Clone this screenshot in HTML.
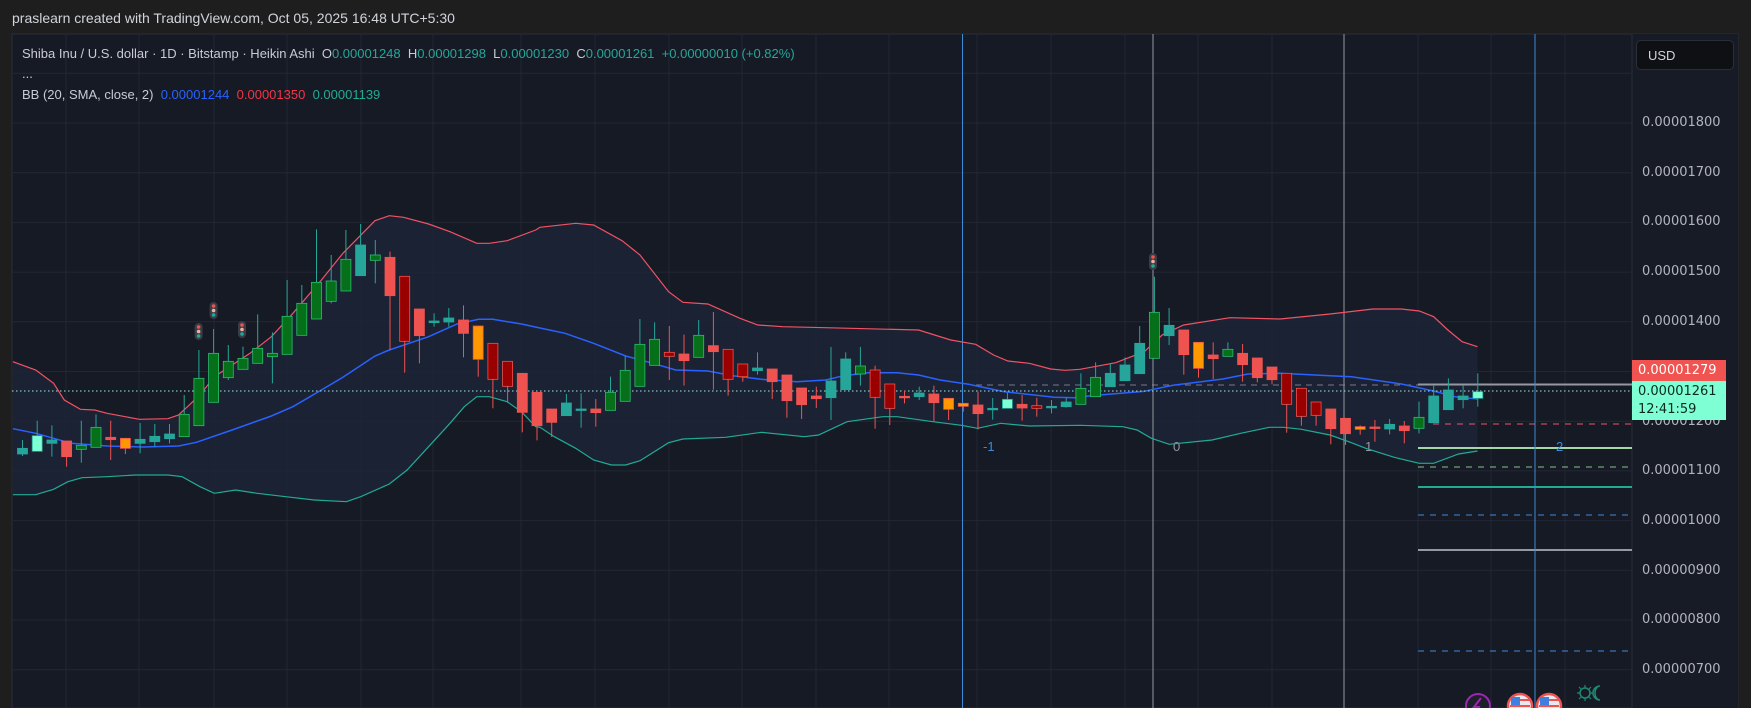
<!DOCTYPE html>
<html><head><meta charset="utf-8"><style>
html,body{margin:0;padding:0;width:1751px;height:708px;overflow:hidden;background:#1e1e1e;font-family:"Liberation Sans",sans-serif}
#hdr{position:absolute;left:12px;top:10px;color:#d1d4dc;font-size:14px}
#lg{position:absolute;left:22px;top:46px;font-size:13px;color:#c8cbd3;white-space:nowrap}
#lg span.g{color:#26a69a}
#dots{position:absolute;left:22px;top:66px;color:#c8cbd3;font-size:13px}
#bb{position:absolute;left:22px;top:87px;font-size:13px;color:#c8cbd3}
svg{position:absolute;left:0;top:0}
.ax{position:absolute;left:1642px;font-size:13px;color:#b2b5be;font-family:"DejaVu Sans",sans-serif;letter-spacing:0}
#usd{position:absolute;left:1636px;top:40px;width:98px;height:30px;background:#0f1014;border:1px solid #2a2e39;border-radius:5px;color:#d1d4dc;font-size:13px;line-height:30px;box-sizing:border-box;padding-left:11px}
.pl{position:absolute;left:1632px;width:94px;font-family:"DejaVu Sans",sans-serif;font-size:13px;padding-left:6px;box-sizing:border-box}
</style></head><body>
<svg id="s" width="1751" height="708"></svg>
<div id="hdr">praslearn created with TradingView.com, Oct 05, 2025 16:48 UTC+5:30</div>
<div id="lg">Shiba Inu / U.S. dollar · 1D · Bitstamp · Heikin Ashi&nbsp; O<span class="g">0.00001248</span>&nbsp; H<span class="g">0.00001298</span>&nbsp; L<span class="g">0.00001230</span>&nbsp; C<span class="g">0.00001261</span>&nbsp; <span class="g">+0.00000010 (+0.82%)</span></div>
<div id="dots">...</div>
<div id="bb">BB (20, SMA, close, 2)&nbsp; <span style="color:#2962ff">0.00001244</span>&nbsp; <span style="color:#f23645">0.00001350</span>&nbsp; <span style="color:#22ab94">0.00001139</span></div>
<div id="usd">USD</div>
<div class="ax" style="top:115px">0.00001800</div>
<div class="ax" style="top:165px">0.00001700</div>
<div class="ax" style="top:214px">0.00001600</div>
<div class="ax" style="top:264px">0.00001500</div>
<div class="ax" style="top:314px">0.00001400</div>
<div class="ax" style="top:414px">0.00001200</div>
<div class="ax" style="top:463px">0.00001100</div>
<div class="ax" style="top:513px">0.00001000</div>
<div class="ax" style="top:563px">0.00000900</div>
<div class="ax" style="top:612px">0.00000800</div>
<div class="ax" style="top:662px">0.00000700</div>
<div class="pl" style="top:360px;height:21px;background:#f05350;color:#fff;line-height:21px">0.00001279</div>
<div class="pl" style="top:381px;height:39px;background:#7fffd4;color:#0b2a22;line-height:18px;padding-top:2px">0.00001261<br>12:41:59</div>
<script>
var s=document.getElementById('s'),h='';
function P(a,ox,lim){return a.filter(function(p){return lim?p[0]<=lim:true}).map(function(p){return (ox+p[0]/2.8).toFixed(1)+','+(200+p[1]/3).toFixed(1)}).join(' ')}
h+='<rect x="12" y="34" width="1726" height="674" fill="#161a25"/>';
h+='<rect x="12" y="34" width="1726" height="674" fill="none" stroke="#2a2e39"/>';
h+='<rect x="1632" y="34" width="106" height="674" fill="#171b26"/><line x1="1632" y1="34" x2="1632" y2="708" stroke="#2a2e39"/>';
var vx=[66,139,214,287,361,433,521,595,669,742,816,889,977,1051,1125,1198,1272,1344,1418,1491,1565];
vx.forEach(function(x){h+='<line x1="'+x+'" y1="34" x2="'+x+'" y2="708" stroke="#232735"/>'});
for(var p=1900;p>=600;p-=100){var y=123+(1800-p)*0.497;h+='<line x1="12" y1="'+y+'" x2="1632" y2="'+y+'" stroke="#232735"/>'}
var U3=[[36,485],[100,510],[150,550],[180,600],[225,628],[265,630],[300,640],[390,658],[470,656],[500,645],[560,585],[600,530],[700,460],[760,410],[820,340],[900,240],[960,160],[1050,62],[1090,47],[1130,52],[1200,72],[1260,95],[1335,130],[1370,130],[1420,122],[1500,90],[1568,72]];
var U4=[[0,82],[100,70],[150,75],[230,122],[280,165],[360,275],[400,307],[470,312],[560,355],[610,375],[680,380],[800,383],[1060,390],[1150,420],[1220,433],[1270,465],[1310,483],[1370,490],[1430,507],[1470,511],[1520,503],[1568,495]];
var U5=[[0,508],[100,488],[180,455],[230,405],[290,375],[420,353],[560,357],[700,342],[820,327],[900,327],[950,333],[990,350],[1030,390],[1070,425],[1113,440]];
var M3=[[36,686],[100,700],[200,730],[300,738],[400,741],[500,738],[550,727],[650,690],[760,648],[820,620],[900,570],[960,532],[1050,468],[1090,450],[1200,410],[1280,372],[1340,358],[1380,358],[1460,372],[1568,398]];
var M4=[[0,384],[70,400],[150,430],[240,468],[300,485],[380,510],[470,513],[540,527],[620,538],[720,545],[800,540],[850,527],[920,518],[1000,518],[1060,525],[1120,540],[1200,553],[1300,575],[1440,592],[1500,593],[1568,585]];
var M5=[[0,590],[80,583],[180,574],[260,556],[400,537],[470,522],[560,520],[700,527],[760,530],[900,552],[990,573],[1050,590],[1113,597]];
var L3=[[36,884],[100,884],[150,868],[190,845],[230,833],[300,830],[380,825],[470,825],[510,830],[560,860],[600,880],[660,870],[720,880],[800,890],[880,900],[970,905],[1010,890],[1090,852],[1140,810],[1200,740],[1260,670],[1300,620],[1335,590],[1370,590],[1420,605],[1460,635],[1500,680],[1540,708],[1568,720]];
var L4=[[0,682],[40,710],[100,745],[150,780],[200,795],[240,795],[280,782],[360,728],[400,717],[520,712],[620,697],[740,710],[780,705],[860,665],[960,650],[1000,650],[1100,665],[1180,676],[1225,685],[1290,670],[1370,678],[1568,676]];
var L5=[[0,676],[120,680],[160,690],[200,715],[250,733],[370,720],[450,700],[530,682],[570,682],[620,688],[700,705],[760,728],[800,745],[880,772],[950,790],[990,790],[1060,762],[1113,753]];
var up=P(U3,0,1512)+' '+P(U4,540,1512)+' '+P(U5,1080);
var lo=P(L3,0,1512)+' '+P(L4,540,1512)+' '+P(L5,1080);
var loR=lo.split(' ').reverse().join(' ');
h+='<polygon points="'+up+' '+loR+'" fill="#1c2536" opacity="0.85"/>';
h+='<line x1="976" y1="385" x2="1418" y2="385" stroke="#787b86" stroke-dasharray="6,5"/>';
h+='<line x1="1418" y1="384.5" x2="1632" y2="384.5" stroke="#9598a1" stroke-width="2"/>';
h+='<line x1="1433" y1="424" x2="1632" y2="424" stroke="#f05365" stroke-dasharray="6,6"/>';
h+='<line x1="1418" y1="448" x2="1632" y2="448" stroke="#a5d6a7" stroke-width="2"/>';
h+='<line x1="1418" y1="467" x2="1632" y2="467" stroke="#81c784" stroke-dasharray="6,6"/>';
h+='<line x1="1418" y1="487" x2="1632" y2="487" stroke="#22ab94" stroke-width="2"/>';
h+='<line x1="1418" y1="515" x2="1632" y2="515" stroke="#3d8bd9" stroke-dasharray="6,6"/>';
h+='<line x1="1418" y1="550" x2="1632" y2="550" stroke="#9598a1" stroke-width="2"/>';
h+='<line x1="1418" y1="651" x2="1632" y2="651" stroke="#3d8bd9" stroke-dasharray="6,6"/>';
h+='<line x1="962.5" y1="34" x2="962.5" y2="708" stroke="#3d8bd9"/>';
h+='<line x1="1153" y1="34" x2="1153" y2="708" stroke="#9598a1"/>';
h+='<line x1="1344" y1="34" x2="1344" y2="708" stroke="#9598a1"/>';
h+='<line x1="1535" y1="34" x2="1535" y2="708" stroke="#3d8bd9"/>';
h+='<text x="983" y="451" fill="#3d8bd9" font-size="13" font-family="Liberation Sans">-1</text>';
h+='<text x="1173" y="451" fill="#9598a1" font-size="13" font-family="Liberation Sans">0</text>';
h+='<text x="1365" y="451" fill="#9598a1" font-size="13" font-family="Liberation Sans">1</text>';
h+='<text x="1556" y="451" fill="#3d8bd9" font-size="13" font-family="Liberation Sans">2</text>';
h+='<polyline points="'+up+'" fill="none" stroke="#f05365" stroke-width="1.2"/>';
h+='<polyline points="'+P(M3,0,1512)+' '+P(M4,540,1512)+' '+P(M5,1080)+'" fill="none" stroke="#2962ff" stroke-width="1.5"/>';
h+='<polyline points="'+lo+'" fill="none" stroke="#22ab94" stroke-width="1.2"/>';
var C="745 762 720 768 T|707 754 662 754 L|720 730 676 770 T|723 770 723 800 R|736 748 662 788 G|682 742 643 742 G|712 719 662 780 R|715 745 715 762 O|718 730 669 760 T|709 725 672 740 T|702 716 672 730 T|643 710 585 710 G|535 677 450 677 G|460 607 387 607 G|484 533 435 540 G|475 508 440 508 G|445 490 343 490 G|460 470 397 550 G|349 463 240 463 G|310 406 255 406 G|247 357 88 357 G|243 304 165 310 G|178 273 90 273 G|135 227 72 227 T|165 181 120 250 G|172 287 155 450 R|229 424 229 518 D|327 407 327 490 R|363 368 340 380 T|354 366 324 380 T|360 400 316 472 R|378 478 378 530 O|430 538 430 625 D|484 559 484 605 D|520 637 520 697 R|577 677 577 721 R|627 667 627 711 R|609 647 582 647 T|627 629 580 683 T|627 638 597 680 R|577 631 530 631 G|511 604 468 604 G|433 559 357 559 G|418 496 367 496 G|457 469 378 540 D|462 482 404 557 R|406 472 360 472 G|437 455 336 569 R|448 538 448 587 D|492 530 492 545 D|504 512 457 524 T|507 545 507 597 R|525 602 525 653 R|564 614 564 657 R|588 596 560 624 R|543 593 441 660 T|477 569 457 569 T|498 522 441 557 G|510 592 497 686 D|552 625 552 675 D|589 592 572 610 R|579 590 560 600 T|582 608 557 664 R|595 628 595 660 O|610 619 610 635 O|615 641 575 688 R|625 627 594 659 T|598 625 578 625 L|613 624 585 662 R|617 625 593 650 D|619 623 600 640 T|606 620 592 623 T|565 613 520 613 G|532 590 487 590 G|520 560 490 560 T|495 542 472 542 T|430 521 378 521 T|337 475 230 475 G|376 407 324 435 T|390 464 390 524 R|427 505 427 533 O|465 476 427 537 R|448 469 427 469 G|460 494 432 545 R|474 533 474 547 R|501 539 501 553 R|520 613 520 698 D|565 649 565 677 D|606 646 606 677 D|627 686 627 733 R|655 701 655 735 R|680 688 676 704 O|681 683 660 725 R|673 687 657 703 T|678 692 663 730 R|652 685 605 700 G|588 668 555 668 T|570 629 535 629 T|588 599 555 625 T|575 595 520 620 L".split('|');
var col={T:['#26a69a','#26a69a','#26a69a'],L:['#7fffd4','#26a69a','#26a69a'],G:['#056f1a','#2bbd6e','#26a69a'],R:['#ef5350','#ef5350','#ef5350'],D:['#990000','#ef5350','#ef5350'],O:['#ff9800','#ef5350','#ef5350']};
h+='<line x1="12" y1="391" x2="1632" y2="391" stroke="#9be8e0" stroke-dasharray="1.5,2.5"/>';
C.forEach(function(c,i){var a=c.split(' '),x=22.5+14.7*i,t=200+a[0]/3,b=200+a[1]/3,wt=200+a[2]/3,wb=200+a[3]/3,k=col[a[4]];
 h+='<line x1="'+x+'" y1="'+wt+'" x2="'+x+'" y2="'+wb+'" stroke="'+k[2]+'"/>';
 h+='<rect x="'+(x-5)+'" y="'+t+'" width="10" height="'+Math.max(b-t,1.5)+'" fill="'+k[0]+'" stroke="'+k[1]+'" stroke-width="0.8"/>';});
[[198.6,323],[213.6,302],[242,321],[1153,253]].forEach(function(f){h+='<rect x="'+(f[0]-4)+'" y="'+f[1]+'" width="8" height="17" rx="4" fill="#3a3d47"/><circle cx="'+f[0]+'" cy="'+(f[1]+4)+'" r="1.8" fill="#ef5350"/><circle cx="'+f[0]+'" cy="'+(f[1]+8.5)+'" r="1.8" fill="#f0b0a0"/><circle cx="'+f[0]+'" cy="'+(f[1]+13)+'" r="1.8" fill="#26a69a"/>'});
h+='<circle cx="1478" cy="706" r="12" fill="#1e1f2b" stroke="#9c27b0" stroke-width="2"/><path d="M1481 698 L1474 707 L1479 707 L1476 714" stroke="#9c27b0" stroke-width="2" fill="none"/>';
[1520,1549].forEach(function(x){h+='<circle cx="'+x+'" cy="706" r="12" fill="#e8e8f0" stroke="#ef5350" stroke-width="2.5"/><rect x="'+(x-9)+'" y="697" width="9" height="8" fill="#3f7fe0"/><line x1="'+(x-10)+'" y1="706" x2="'+(x+10)+'" y2="706" stroke="#ef5350" stroke-width="2"/><line x1="'+x+'" y1="700" x2="'+(x+10)+'" y2="700" stroke="#ef5350" stroke-width="2"/>'});
h+='<circle cx="1585" cy="693" r="5" fill="none" stroke="#1f8a70" stroke-width="1.5"/><path d="M1585 685v3M1585 698v3M1577 693h3M1590 693h3M1579 687l2 2M1589 697l2 2M1579 699l2-2M1589 689l2-2" stroke="#1f8a70" stroke-width="1.2"/><path d="M1600 686 a7 7 0 1 0 0 14 a5 7 0 1 1 0 -14" fill="none" stroke="#1f8a70" stroke-width="1.5"/>';
s.innerHTML=h;
</script>
</body></html>
